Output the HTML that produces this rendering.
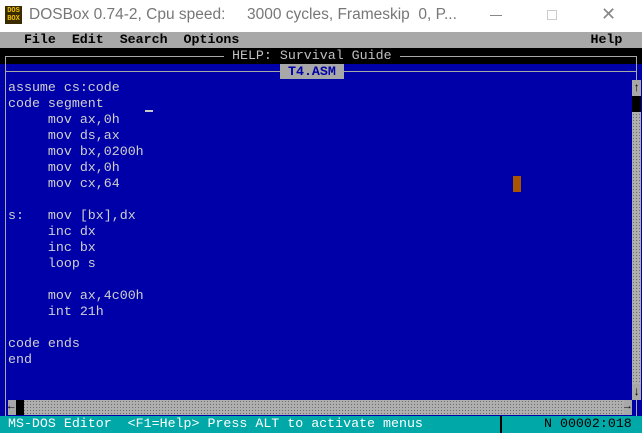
<!DOCTYPE html>
<html><head><meta charset="utf-8"><style>
*{margin:0;padding:0;box-sizing:border-box}
body{width:642px;height:433px;overflow:hidden;background:#0000a8;position:relative;font-family:"Liberation Mono",monospace;font-size:13.3px;line-height:16px}
.a{position:absolute}
.t{white-space:pre}
.dot{background-color:#b0b0b0;background-image:radial-gradient(#707070 0.7px,transparent 0.8px);background-size:3px 3px}
</style></head><body>
<div class="a" style="left:0;top:0;width:642px;height:32px;background:#fff"></div>
<div class="a" style="left:5px;top:6px;width:17px;height:18px;background:#3a2a00;color:#f0c000;font:bold 7px/8px 'Liberation Mono';text-align:center;padding-top:1px">DOS<br>BOX</div>
<div class="a t" style="left:29px;top:5px;font:15.5px/20px 'Liberation Sans',sans-serif;color:#777">DOSBox 0.74-2, Cpu speed:     3000 cycles, Frameskip  0, P...</div>
<div class="a" style="left:490px;top:15px;width:12px;height:1px;background:#888"></div>
<div class="a" style="left:547px;top:10px;width:10px;height:10px;border:1px solid #ccc"></div>
<div class="a t" style="left:601px;top:4px;font:18px/20px 'Liberation Sans';color:#888">✕</div>

<div class="a t" style="left:0;top:32px;width:642px;height:16px;background:#a8a8a8;color:#000;font-weight:bold">   File  Edit  Search  Options                                            Help</div>
<div class="a" style="left:0;top:48px;width:642px;height:16px;background:#000"></div>
<div class="a" style="left:5px;top:56px;width:632px;height:1px;background:#a8a8a8"></div>
<div class="a" style="left:5px;top:56px;width:1px;height:360px;background:#a8a8a8"></div>
<div class="a" style="left:636px;top:56px;width:1px;height:24px;background:#a8a8a8"></div>
<div class="a t" style="left:224px;top:48px;background:#000;color:#c0c0c0"> HELP: Survival Guide </div>
<div class="a" style="left:6px;top:71px;width:630px;height:1px;background:#a8a8a8"></div>
<div class="a t" style="left:280px;top:64px;height:15px;background:#a8a8a8;color:#0000a8;font-weight:bold"> T4.ASM </div>
<div class="a t" style="left:8px;top:80px;color:#d0d0d0">assume cs:code
code segment
     mov ax,0h
     mov ds,ax
     mov bx,0200h
     mov dx,0h
     mov cx,64

s:   mov [bx],dx
     inc dx
     inc bx
     loop s

     mov ax,4c00h
     int 21h

code ends
end</div>
<div class="a" style="left:145px;top:110px;width:8px;height:2px;background:#c8c8c8"></div>
<div class="a" style="left:513px;top:176px;width:8px;height:16px;background:#a85400"></div>

<div class="a dot" style="left:632px;top:80px;width:9px;height:320px"></div>
<div class="a" style="left:632px;top:80px;width:9px;height:16px;background:#a8a8a8;color:#000;font-weight:bold;text-align:center;font-size:12px">↑</div>
<div class="a" style="left:632px;top:96px;width:9px;height:16px;background:#000"></div>
<div class="a" style="left:632px;top:384px;width:9px;height:16px;background:#a8a8a8;color:#000;font-weight:bold;text-align:center;font-size:12px">↓</div>
<div class="a dot" style="left:8px;top:400px;width:624px;height:15px"></div>
<div class="a" style="left:8px;top:400px;width:8px;height:15px;background:#a8a8a8;color:#000;font-size:11px;line-height:15px">←</div>
<div class="a" style="left:16px;top:400px;width:8px;height:15px;background:#000"></div>
<div class="a" style="left:624px;top:400px;width:8px;height:15px;background:#a8a8a8;color:#000;font-size:11px;line-height:15px">→</div>
<div class="a" style="left:636px;top:400px;width:1px;height:16px;background:#a8a8a8"></div>

<div class="a t" style="left:0;top:416px;width:642px;height:17px;background:#00a8a8;color:#fff"> MS-DOS Editor  &lt;F1=Help&gt; Press ALT to activate menus</div>
<div class="a" style="left:500px;top:416px;width:2px;height:17px;background:#000"></div>
<div class="a t" style="left:544px;top:416px;color:#000">N 00002:018</div>
</body></html>
